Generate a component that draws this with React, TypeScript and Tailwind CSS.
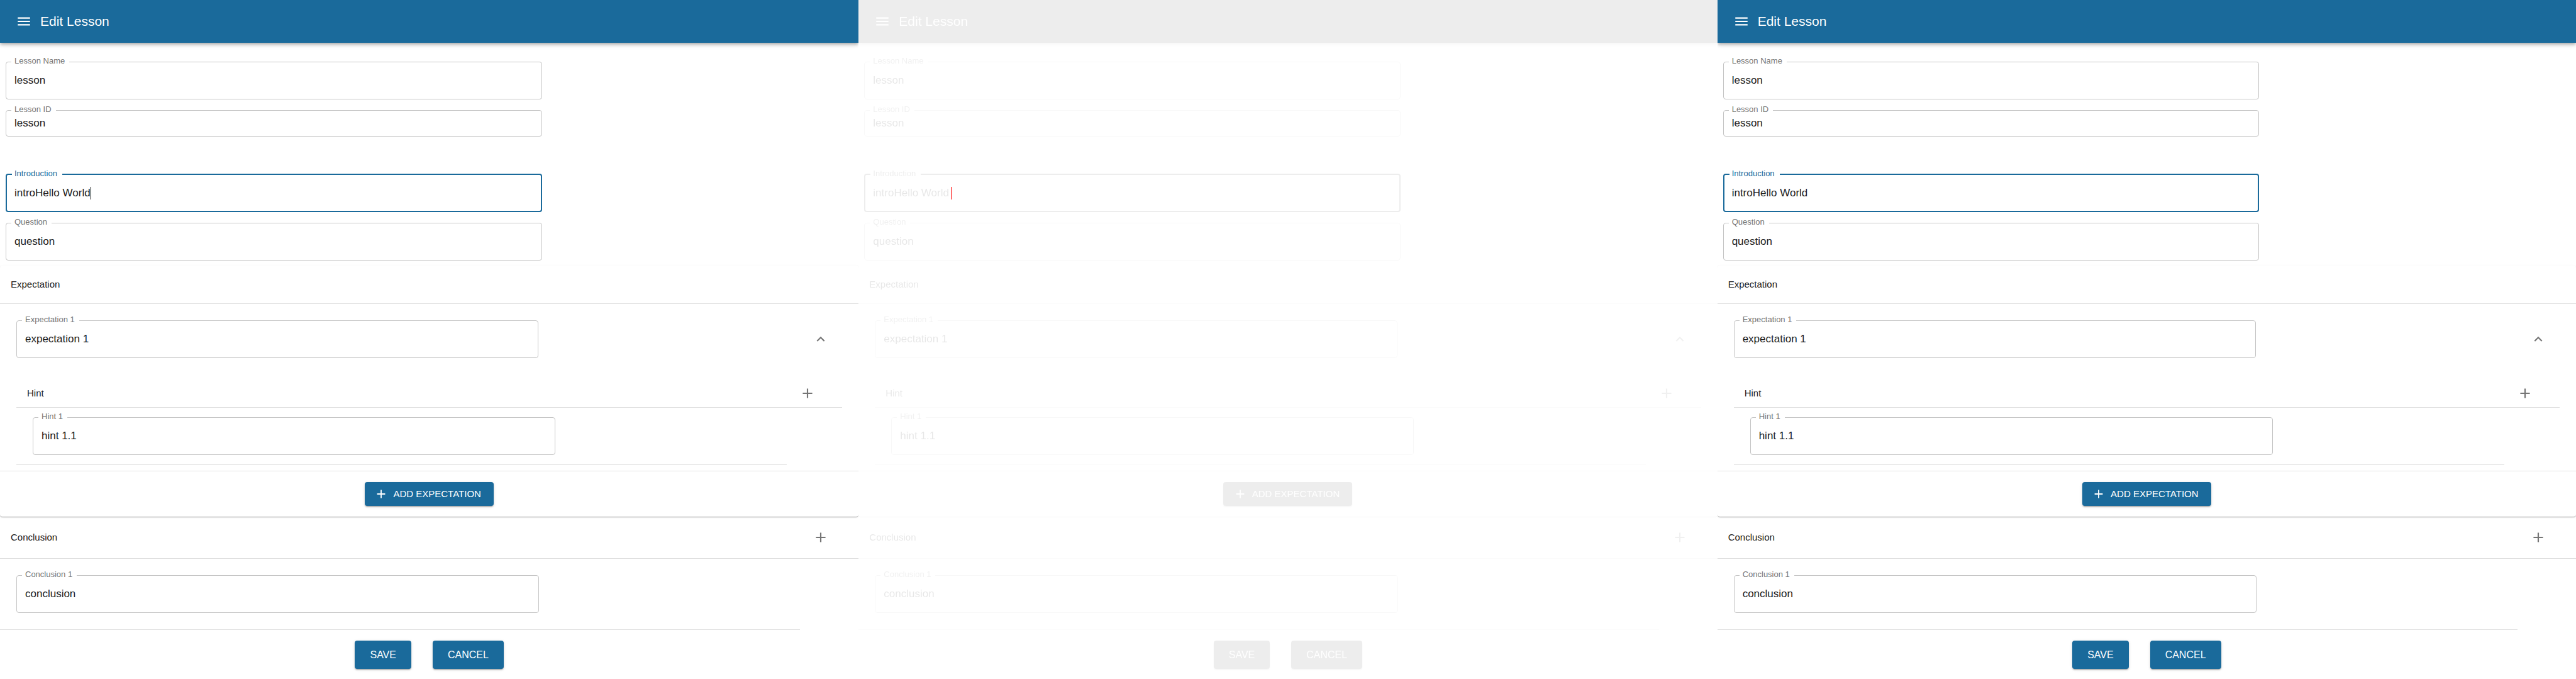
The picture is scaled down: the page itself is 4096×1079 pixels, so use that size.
import React, { useId } from "react";

type Tone = "normal" | "focused";

function MenuIcon() {
  return (
    <svg viewBox="0 0 24 24" className="size-[26px] fill-current" aria-hidden="true">
      <path d="M3 18h18v-2H3v2zm0-5h18v-2H3v2zm0-7v2h18V6H3z" />
    </svg>
  );
}

function AddIcon({ small = false }: { small?: boolean }) {
  return (
    <svg viewBox="0 0 24 24" className={small ? "size-[22px] fill-current" : "size-[26px] fill-current"} aria-hidden="true">
      <path d="M19 13h-6v6h-2v-6H5v-2h6V5h2v6h6v2z" />
    </svg>
  );
}

function ExpandLessIcon() {
  return (
    <svg viewBox="0 0 24 24" className="size-[26px] fill-current" aria-hidden="true">
      <path d="M12 8l-6 6 1.41 1.41L12 10.83l4.59 4.58L18 14z" />
    </svg>
  );
}

interface FieldProps {
  label: string;
  value: string;
  tone?: Tone;
  caret?: boolean;
  dense?: boolean;
}

function Field({ label, value, tone = "normal", caret = false, dense = false }: FieldProps) {
  const id = useId();
  const focused = tone === "focused";
  return (
    <div className={dense ? "relative flex h-[42px] items-center pl-[14px]" : "relative flex h-[60px] items-center pl-[14px]"}>
      <fieldset
        aria-hidden="true"
        className={
          focused
            ? "pointer-events-none absolute inset-x-0 -top-[7px] bottom-0 rounded-[4px] border-2 border-[#1a6a9b] pl-2"
            : "pointer-events-none absolute inset-x-0 -top-[7px] bottom-0 rounded-[4px] border border-[#c4c4c4] pl-2"
        }
      >
        <legend className="invisible h-[14px] px-[6px] text-[13px] leading-[14px]">{label}</legend>
      </fieldset>
      <label
        htmlFor={id}
        className={
          focused
            ? "absolute -top-2 left-[14px] text-[13px] leading-[14px] text-[#1a6a9b]"
            : "absolute -top-2 left-[14px] text-[13px] leading-[14px] text-[#757575]"
        }
      >
        {label}
      </label>
      <input
        id={id}
        type="text"
        defaultValue={value}
        className={
          caret
            ? "h-5 field-sizing-content bg-transparent text-[17px] leading-5 text-[#212121] outline-none"
            : "h-5 w-full bg-transparent text-[17px] leading-5 text-[#212121] outline-none"
        }
      />
      {caret && <span className="h-5 w-px bg-black" />}
    </div>
  );
}

function IconButton({ label, children }: { label: string; children: React.ReactNode }) {
  return (
    <button type="button" aria-label={label} className="flex size-8 items-center justify-center text-[#757575]">
      {children}
    </button>
  );
}

const raised =
  "rounded-[4px] bg-[#1a6a9b] text-white shadow-[0_3px_1px_-2px_rgba(0,0,0,0.2),0_2px_2px_0_rgba(0,0,0,0.14),0_1px_5px_0_rgba(0,0,0,0.12)]";

function EditLesson({ caret = false }: { caret?: boolean }) {
  return (
    <section className="flex flex-col">
      <header className="relative flex h-[68px] items-center bg-[#1a6a9b] pl-[25px] text-white shadow-[0_2px_4px_-1px_rgba(0,0,0,0.2),0_4px_5px_0_rgba(0,0,0,0.14),0_1px_10px_0_rgba(0,0,0,0.12)]">
        <button type="button" aria-label="Open menu">
          <MenuIcon />
        </button>
        <h1 className="pl-[13px] text-[21px] leading-8 font-medium">Edit Lesson</h1>
      </header>

      <div className="flex w-[63.1%] flex-col gap-[17px] pt-[30px] pl-[9px]">
        <Field label="Lesson Name" value="lesson" />
        <Field label="Lesson ID" value="lesson" dense />
      </div>
      <div className="flex w-[63.1%] flex-col gap-[17px] pt-[60px] pb-2 pl-[9px]">
        <Field label="Introduction" value="introHello World" tone="focused" caret={caret} />
        <Field label="Question" value="question" />
      </div>

      <div className="flex flex-col rounded-[4px] shadow-[0_2px_1px_-1px_rgba(0,0,0,0.2),0_1px_1px_0_rgba(0,0,0,0.14),0_1px_3px_0_rgba(0,0,0,0.12)]">
        <div className="flex h-[61px] items-center border-b border-[#e0e0e0] pl-[17px]">
          <h2 className="text-[15px] leading-5 text-[#212121]">Expectation</h2>
        </div>
        <div className="flex items-center justify-between pt-[26px] pr-11 pl-[26px]">
          <div className="w-[64.1%]">
            <Field label="Expectation 1" value="expectation 1" />
          </div>
          <IconButton label="Collapse expectation">
            <ExpandLessIcon />
          </IconButton>
        </div>
        <div className="flex flex-col pt-[34px] pr-[26px] pb-[9px] pl-[26px]">
          <div className="flex h-[45px] items-center justify-between border-b border-[#e0e0e0] pr-[39px] pl-[17px]">
            <h3 className="text-[15px] leading-5 text-[#212121]">Hint</h3>
            <IconButton label="Add hint">
              <AddIcon />
            </IconButton>
          </div>
          <div className="w-[93.3%] border-b border-[#e0e0e0] pt-[15px] pb-[15px] pl-[26px]">
            <div className="w-[69.3%]">
              <Field label="Hint 1" value="hint 1.1" />
            </div>
          </div>
        </div>
        <div className="flex h-[73px] items-center justify-center border-t border-[#e0e0e0]">
          <button
            type="button"
            className={"flex h-[38px] min-w-[205px] items-center justify-center gap-2 pr-[17px] pl-3 text-[15px] leading-5 font-medium " + raised}
          >
            <AddIcon small />
            ADD EXPECTATION
          </button>
        </div>
      </div>

      <div className="flex h-[67px] items-center justify-between border-b border-[#e0e0e0] pr-11 pl-[17px]">
        <h2 className="text-[15px] leading-5 text-[#212121]">Conclusion</h2>
        <IconButton label="Add conclusion">
          <AddIcon />
        </IconButton>
      </div>
      <div className="w-[93.2%] border-b border-[#e0e0e0] pt-[26px] pb-[26px] pl-[26px]">
        <div className="w-[66.7%]">
          <Field label="Conclusion 1" value="conclusion" />
        </div>
      </div>
      <div className="flex justify-center gap-[34px] pt-[17px] pb-4">
        <button type="button" className={"h-[45px] px-6 text-[16px] leading-5 font-medium " + raised}>
          SAVE
        </button>
        <button type="button" className={"h-[45px] px-6 text-[16px] leading-5 font-medium " + raised}>
          CANCEL
        </button>
      </div>
    </section>
  );
}

export default function App() {
  return (
    <main className="grid min-h-screen grid-cols-3 bg-white font-['Liberation_Sans',Arial,sans-serif]">
      <div className="overflow-hidden">
        <EditLesson caret />
      </div>
      <div className="relative overflow-hidden">
        <div className="opacity-10 grayscale">
          <EditLesson />
        </div>
        <span className="absolute top-[297px] left-[147px] h-5 w-px bg-[#ff0000]" />
      </div>
      <div className="overflow-hidden">
        <EditLesson />
      </div>
    </main>
  );
}
